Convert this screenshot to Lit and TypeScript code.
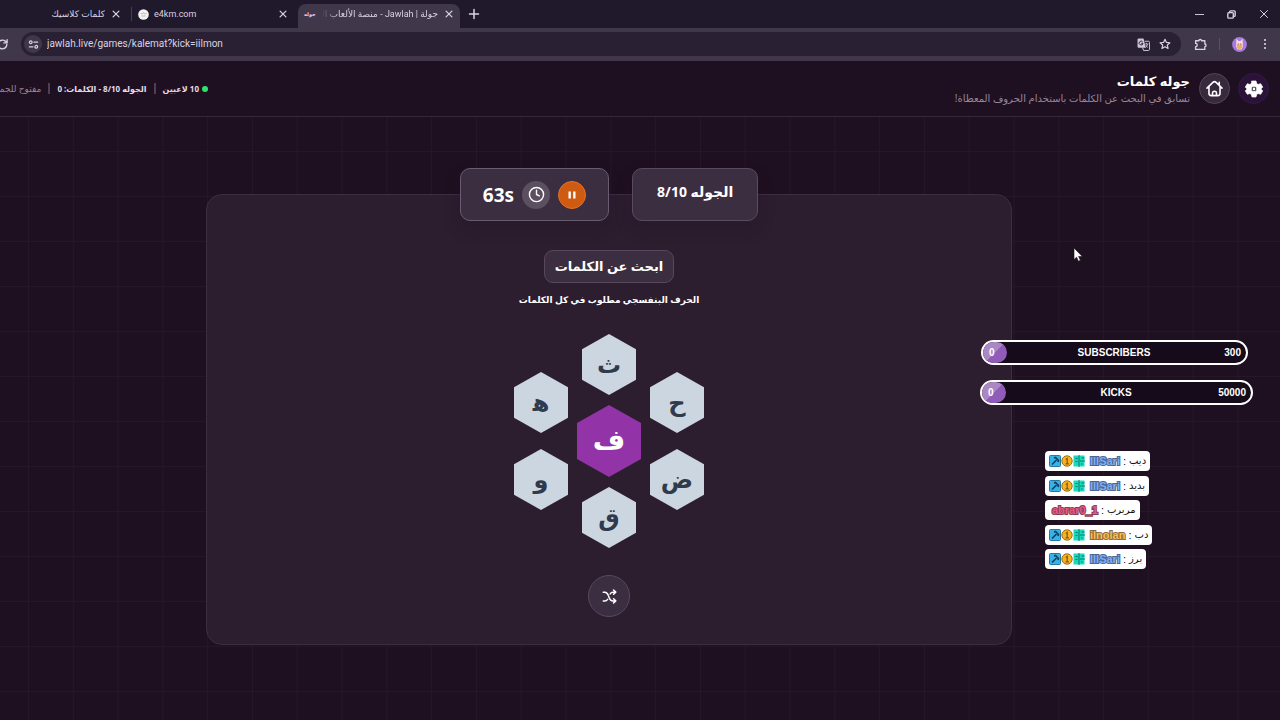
import { LitElement, html, css, svg } from "lit";
import { customElement, property } from "lit/decorators.js";

const icon = (body: unknown, size = 16, width = 2) => html`<svg
  width=${size}
  height=${size}
  viewBox="0 0 24 24"
  fill="none"
  stroke="currentColor"
  stroke-width=${width}
  stroke-linecap="round"
  stroke-linejoin="round"
  aria-hidden="true"
>
  ${body}
</svg>`;

const closePath = svg`<path d="M5 5l14 14M19 5L5 19"/>`;
const gearPath = svg`<path fill="currentColor" stroke="currentColor" stroke-width="1" fill-rule="evenodd" d="M9.600 2.500h4.800l.7 3 1.900 1.100 3-.9 2.400 4.100-2.300 2.200 2.300 2.200-2.400 4.100-3-.9-1.900 1.100-.7 3H9.600l-.7-3L7 17.400l-3 .9-2.400-4.100L3.900 12 1.600 9.800 4 5.700l3 .9 1.900-1.100zM12 15.400a3.400 3.400 0 1 0 0-6.800 3.400 3.400 0 0 0 0 6.800z"/><circle cx="12" cy="12" r="1.700" fill="currentColor" stroke="none"/>`;

@customElement("hex-tile")
export class HexTile extends LitElement {
  @property() letter = "";
  @property({ type: Boolean, reflect: true }) core = false;

  static styles = css`
    :host {
      display: block;
    }
    .tile {
      display: flex;
      align-items: center;
      justify-content: center;
      box-sizing: border-box;
      width: 54px;
      height: 61px;
      padding: 0 0 2px;
      border: 0;
      background: #ccd6e1;
      color: #2f3b4c;
      clip-path: polygon(50% 0, 100% 25%, 100% 75%, 50% 100%, 0 75%, 0 25%);
      font: bold 24px/32px "Noto Sans", "DejaVu Sans", sans-serif;
    }
    :host([core]) .tile {
      width: 64px;
      height: 72px;
      padding-bottom: 6px;
      background: #9234a8;
      color: #fff;
      font-size: 28px;
    }
  `;

  render() {
    return html`<button class="tile" lang="ar">${this.letter}</button>`;
  }
}

@customElement("goal-bar")
export class GoalBar extends LitElement {
  @property() label = "";
  @property() current = "0";
  @property() target = "";

  static styles = css`
    :host {
      display: block;
    }
    .bar {
      display: grid;
      grid-template-columns: 1fr auto 1fr;
      align-items: center;
      box-sizing: border-box;
      height: 25px;
      padding-right: 5px;
      border: 2px solid #fff;
      border-radius: 13px;
      background: #150b1a;
      color: #fff;
      font: bold 10px/14px "Liberation Sans", sans-serif;
    }
    .knob {
      display: flex;
      align-items: center;
      box-sizing: border-box;
      width: 24px;
      height: 21px;
      padding-left: 6px;
      border-radius: 11px;
      background: linear-gradient(135deg, #ab87c4 50%, #915cb9 50%);
    }
    .label {
      padding-left: 4px;
    }
    .target {
      text-align: right;
    }
  `;

  render() {
    return html`<div class="bar">
      <span class="knob">${this.current}</span>
      <span class="label">${this.label}</span>
      <span class="target">${this.target}</span>
    </div>`;
  }
}

interface Message {
  user: string;
  tone: string;
  text: string;
  badges: boolean;
}

@customElement("chat-feed")
export class ChatFeed extends LitElement {
  messages: Message[] = [
    { user: "IllSari", tone: "blue", text: "ديب", badges: true },
    { user: "IllSari", tone: "blue", text: "بديد", badges: true },
    { user: "abrar0_1", tone: "rose", text: "مربرب", badges: false },
    { user: "ilnolan", tone: "gold", text: "دب", badges: true },
    { user: "IllSari", tone: "blue", text: "برز", badges: true },
  ];

  static styles = css`
    .feed {
      display: flex;
      flex-direction: column;
      align-items: flex-start;
      justify-content: space-between;
      min-height: 118px;
      margin: 0;
      padding: 0;
      list-style: none;
    }
    .message {
      display: flex;
      align-items: center;
      height: 20px;
      padding: 0 4px;
      border-radius: 4px;
      background: #fff;
      color: #111;
      font: 11px/20px "Liberation Sans", "DejaVu Sans", sans-serif;
    }
    .badges {
      display: flex;
      margin-right: 4px;
    }
    .user {
      padding: 0 3px 0 1px;
      font-weight: bold;
      font-size: 11px;
      -webkit-text-stroke: 2px #5a6478;
      paint-order: stroke fill;
    }
    .blue {
      color: #7fb0f2;
      -webkit-text-stroke-color: #4a6596;
    }
    .rose {
      padding-left: 3px;
      color: #e65c85;
      -webkit-text-stroke-color: #8f3a55;
    }
    .gold {
      color: #f8be56;
      -webkit-text-stroke-color: #8f6c38;
    }
    .text {
      padding-left: 3px;
      font-size: 10px;
    }
  `;

  badges() {
    return html`<svg class="badges" width="36" height="12" viewBox="0 0 36 12" aria-hidden="true">
      <rect x="0.5" y="0.5" width="11" height="11" rx="1" fill="#35b2e8" stroke="#2378a6" />
      <path d="M3 9.5L7.500 5M5 3l1.500-.5 3 3-.5 1.500" stroke="#123d5c" stroke-width="1.6" fill="none" />
      <circle cx="18" cy="6" r="5.2" fill="#f5b324" stroke="#a36c13" />
      <path d="M16.7 4.5l1.5-1v5M16.5 8.8h3.4" stroke="#8b5a10" stroke-width="1.3" fill="none" />
      <rect x="24.500" y=".5" width="11" height="11" fill="#18d8bd" />
      <path d="M30 0v12M31 6h5M26.500 3.500h2M26.500 6.500h2M32.500 3h3M32 9h1.500" stroke="#087a6d" stroke-width="1" />
    </svg>`;
  }

  render() {
    return html`<ul class="feed">
      ${this.messages.map(
        (m) => html`<li class="message">
          ${m.badges ? this.badges() : ""}<span class="user ${m.tone}">${m.user}</span>:<span
            class="text"
            lang="ar"
            dir="rtl"
            >${m.text}</span
          >
        </li>`,
      )}
    </ul>`;
  }
}

@customElement("browser-chrome")
export class BrowserChrome extends LitElement {
  static styles = css`
    :host {
      display: block;
      font: 10px/14px "Noto Sans", "DejaVu Sans", sans-serif;
      color: #d9d2e2;
    }
    button {
      display: flex;
      align-items: center;
      justify-content: center;
      flex: none;
      padding: 0;
      border: 0;
      background: none;
      color: inherit;
      font: inherit;
    }
    svg {
      flex: none;
    }
    .tabs {
      display: flex;
      align-items: flex-end;
      height: 28px;
      background: #20192c;
    }
    .tab {
      display: flex;
      align-items: center;
      box-sizing: border-box;
      height: 24px;
      padding: 0 6px 4px;
      gap: 6px;
    }
    .first {
      width: 131px;
      padding-right: 10px;
      justify-content: flex-end;
    }
    .second {
      width: 166px;
      padding-right: 10px;
      gap: 5px;
    }
    .rule {
      width: 1px;
      height: 14px;
      margin-bottom: 7px;
      background: #453c52;
    }
    .active {
      width: 162px;
      border-radius: 8px 8px 0 0;
      background: #40374b;
    }
    .title {
      flex: 1;
      min-width: 0;
      overflow: hidden;
      white-space: nowrap;
      font-size: 9px;
    }
    .latin {
      font-family: Roboto, sans-serif;
    }
    .fade {
      font-family: Roboto, "DejaVu Sans", sans-serif;
      mask-image: linear-gradient(to right, transparent, #000 16px);
    }
    .brand {
      flex: none;
      color: #f3c9e6;
      font-size: 5px;
      font-weight: bold;
    }
    .add {
      margin: 0 8px 8px 8px;
    }
    .window {
      display: flex;
      align-items: center;
      gap: 21px;
      height: 28px;
      margin-left: auto;
      padding-right: 10px;
    }
    .toolbar {
      display: flex;
      align-items: center;
      box-sizing: border-box;
      height: 33px;
      padding: 0 9px 1px 0;
      background: #40374b;
    }
    .reload {
      width: 9px;
      margin-right: 12px;
      overflow: hidden;
      justify-content: flex-end;
    }
    .omnibox {
      display: flex;
      align-items: center;
      flex: 1;
      height: 24px;
      padding: 0 10px 0 3px;
      gap: 5px;
      border-radius: 12px;
      background: #292133;
    }
    .site {
      width: 18px;
      height: 18px;
      border-radius: 50%;
      background: #40374b;
    }
    .address {
      flex: 1;
      min-width: 0;
      padding: 0;
      border: 0;
      background: none;
      color: #d9d2e2;
      font: 10px/16px Roboto, sans-serif;
    }
    .star {
      margin-left: 4px;
    }
    .tools {
      display: flex;
      align-items: center;
      gap: 12px;
      margin-left: 13px;
    }
    .split {
      width: 1px;
      height: 12px;
      background: #5a5166;
    }
  `;

  render() {
    return html`
      <nav class="tabs" aria-label="Tabs">
        <div class="tab first">
          <span class="title" lang="ar" dir="rtl">كلمات كلاسيك</span>
          <button aria-label="Close">${icon(closePath, 10, 3)}</button>
        </div>
        <span class="rule"></span>
        <div class="tab second">
          <svg width="11" height="11" viewBox="0 0 11 11" aria-hidden="true">
            <circle cx="5.5" cy="5.5" r="5.3" fill="#f4f1f2" />
            <path d="M2.5 4.5l2 .5 1-1.5 1 1.5 2-.5M3.5 7h4" stroke="#aaa3a8" stroke-width=".7" fill="none" />
          </svg>
          <span class="title latin">e4km.com</span>
          <button aria-label="Close">${icon(closePath, 10, 3)}</button>
        </div>
        <div class="tab active">
          <span class="brand" lang="ar">جوله</span>
          <span class="title fade" lang="ar" dir="rtl">جولة | Jawlah - منصة الألعاب الت</span>
          <button aria-label="Close">${icon(closePath, 10, 3)}</button>
        </div>
        <button class="add" aria-label="New tab">${icon(svg`<path d="M12 3v18M3 12h18"/>`, 12, 3)}</button>
        <div class="window">
          <button aria-label="Minimize">${icon(svg`<path d="M3 12h18"/>`, 11, 2)}</button>
          <button aria-label="Restore">
            ${icon(svg`<rect x="4" y="8" width="12" height="12" rx="2"/><path d="M8 8V6a2 2 0 0 1 2-2h8a2 2 0 0 1 2 2v8a2 2 0 0 1-2 2h-2"/>`, 11, 3)}
          </button>
          <button aria-label="Close window">${icon(closePath, 12, 2)}</button>
        </div>
      </nav>
      <div class="toolbar">
        <button class="reload" aria-label="Reload">
          ${icon(svg`<path d="M20 12a8 8 0 1 1-2.500-5.800L20 8.500M20.500 3v6h-6"/>`, 13, 2.6)}
        </button>
        <div class="omnibox">
          <button class="site" aria-label="Site information">
            ${icon(svg`<circle cx="6" cy="7" r="3"/><path d="M13 7h8M3 17h8"/><circle cx="18" cy="17" r="3"/>`, 11, 2.6)}
          </button>
          <input class="address" aria-label="Address" value="jawlah.live/games/kalemat?kick=iilmon" />
          <button aria-label="Translate">
            <svg width="13" height="13" viewBox="0 0 24 24" aria-hidden="true">
              <path d="M3 1h9l4 17H3a2 2 0 0 1-2-2V3a2 2 0 0 1 2-2z" fill="#cfc7d8" />
              <path d="M10.500 7.500A3.500 3.500 0 1 0 11 10H8" fill="none" stroke="#292133" stroke-width="1.8" />
              <path d="M14 6h7a2 2 0 0 1 2 2v13a2 2 0 0 1-2 2h-9l-1.500-5" fill="none" stroke="#cfc7d8" stroke-width="1.800" />
              <path d="M14 11h7M17.500 9v2M19.500 11c-.5 3-2 5-4 7M16 13c1 2 2.500 3.500 4 4.500" fill="none" stroke="#cfc7d8" stroke-width="1.500" />
            </svg>
          </button>
          <button class="star" aria-label="Bookmark">
            ${icon(svg`<path d="M12 2.500l2.900 6.300 6.900.7-5.200 4.600 1.500 6.800L12 17.400l-6.100 3.500 1.500-6.800L2.200 9.500l6.900-.7z"/>`, 12, 2.4)}
          </button>
        </div>
        <div class="tools">
          <button aria-label="Extensions">
            ${icon(svg`<path d="M3 5h6c0-3 5-3 5 0h6v6c3 0 3 5 0 5v5H3v-5c4 0 4-6 0-6z"/>`, 13, 2.5)}
          </button>
          <span class="split"></span>
          <button aria-label="Profile">
            <svg width="15" height="15" viewBox="0 0 15 15" aria-hidden="true">
              <circle cx="7.500" cy="7.500" r="7.400" fill="#a67be0" />
              <path d="M4.200 6L4.500 1.500 6.500 4h2l2-2.500L10.800 6v4l-1.500 2.500H5.700L4.200 10z" fill="#f6dcd0" />
              <path d="M5 7.500h5v3L8.500 12h-2L5 10.500z" fill="#f0ad62" />
              <circle cx="6.200" cy="7" r=".6" fill="#5b3556" /><circle cx="8.800" cy="7" r=".6" fill="#5b3556" />
            </svg>
          </button>
          <button aria-label="Menu">
            ${icon(svg`<g fill="currentColor" stroke="none"><circle cx="12" cy="4" r="2.200"/><circle cx="12" cy="12" r="2.200"/><circle cx="12" cy="20" r="2.200"/></g>`, 12)}
          </button>
        </div>
      </div>
    `;
  }
}

@customElement("app-root")
export class AppRoot extends LitElement {
  static styles = css`
    :host {
      display: flex;
      flex-direction: column;
      position: relative;
      min-height: 100vh;
      overflow: hidden;
      background: #1f1021;
      color: #fff;
      font: bold 12px/16px "Noto Sans", "DejaVu Sans", sans-serif;
    }
    button {
      display: flex;
      align-items: center;
      justify-content: center;
      flex: none;
      box-sizing: border-box;
      padding: 0;
      border: 0;
      color: inherit;
      border-radius: 50%;
    }
    .header {
      display: flex;
      align-items: center;
      box-sizing: border-box;
      height: 56px;
      padding-right: 11px;
      border-bottom: 1px solid #37263a;
      background: #1f1021;
    }
    .round {
      width: 31px;
      height: 31px;
    }
    .settings {
      border: 1px solid #35184a;
      background: #2b1238;
    }
    .home {
      margin-right: 8px;
      border: 1px solid #54455a;
      background: #382a3d;
    }
    .heading {
      flex: 1;
      margin-right: 9px;
    }
    h1 {
      margin: 0;
      font-size: 13px;
      line-height: 18px;
    }
    .heading p {
      margin: 0;
      color: #96859c;
      font-size: 10px;
      font-weight: normal;
      line-height: 16px;
    }
    .status {
      display: flex;
      align-items: center;
      flex: 0 0 208px;
      gap: 7px;
      overflow: hidden;
      white-space: nowrap;
      color: #e4dde8;
      font-size: 8px;
    }
    .status span {
      flex: none;
    }
    .players {
      display: flex;
      align-items: center;
      gap: 3px;
    }
    .dot {
      width: 6px;
      height: 6px;
      border-radius: 50%;
      background: #2fe070;
    }
    .bar {
      width: 2px;
      height: 11px;
      background: #4e3f54;
    }
    .status .muted {
      color: #94859a;
      font-size: 9px;
      font-weight: normal;
    }
    .main {
      flex: 1;
      padding: 51px 268px 75px 206px;
      background-image: linear-gradient(#261628 1px, transparent 1px),
        linear-gradient(to right, #261628 1px, transparent 1px);
      background-size: 100% 45px, 3.5% 100%;
      background-position: 0 34px, 28px 0;
    }
    .badges {
      display: flex;
      position: relative;
      z-index: 1;
      justify-content: center;
      gap: 23px;
    }
    .badge {
      display: flex;
      box-sizing: border-box;
      height: 53px;
      border: 1px solid #5a4b60;
      border-radius: 10px;
      background: #3c2e41;
      box-shadow: 0 8px 16px #1f102140;
    }
    .timer {
      align-items: center;
      gap: 8px;
      padding: 0 22px;
      border-color: #6a5c70;
    }
    .seconds {
      font-size: 19px;
      line-height: 24px;
    }
    .clock,
    .pause {
      display: flex;
      align-items: center;
      justify-content: center;
      width: 28px;
      height: 28px;
      border-radius: 50%;
      background: #5b505f;
    }
    .pause {
      border: 1px solid #e8711f;
      background: #cf5a12;
    }
    .round-no {
      align-items: flex-start;
      padding: 12px 24px;
      font-size: 14px;
      line-height: 22px;
    }
    .panel {
      display: flex;
      flex-direction: column;
      align-items: center;
      box-sizing: border-box;
      margin-top: -27px;
      padding: 55px 16px 27px;
      border: 1px solid #3d2d41;
      border-radius: 16px;
      background: #2c1d2f;
    }
    h2 {
      box-sizing: border-box;
      height: 33px;
      margin: 0;
      padding: 0 10px;
      border: 1px solid #57485c;
      border-radius: 9px;
      background: #3c2e41;
      font-size: 13px;
      line-height: 31px;
    }
    .hint {
      margin: 9px 0 26px;
      font-size: 9px;
      line-height: 16px;
    }
    .letters {
      display: flex;
      align-items: center;
      gap: 9px;
    }
    .column {
      display: flex;
      flex-direction: column;
      align-items: center;
      gap: 16px;
    }
    .middle {
      gap: 10px;
    }
    .shuffle {
      width: 42px;
      height: 42px;
      margin-top: 27px;
      border: 1px solid #57485c;
      background: #3c2e41;
    }
    .goals {
      display: flex;
      flex-direction: column;
      position: absolute;
      top: 340px;
      right: 27px;
      width: 273px;
      gap: 15px;
    }
    .subscribers {
      margin: 0 5px 0 1px;
    }
    .chat {
      position: absolute;
      top: 451px;
      right: 128px;
      width: 107px;
    }
    .cursor {
      position: absolute;
      top: 247px;
      right: 197px;
    }
  `;

  render() {
    return html`
      <browser-chrome></browser-chrome>
      <header class="header" lang="ar" dir="rtl">
        <button class="round settings" aria-label="الإعدادات">${icon(gearPath, 20)}</button>
        <button class="round home" aria-label="الرئيسية">
          ${icon(svg`<path d="M2.500 11.500L10 4.300a3 3 0 0 1 4 0l7.500 7.200M5 9.500V18a3 3 0 0 0 3 3h8a3 3 0 0 0 3-3V9.500M18 4v4M9.500 20.500V18a2.500 2.500 0 0 1 5 0v2.500"/>`, 19, 2)}
        </button>
        <div class="heading">
          <h1>جوله كلمات</h1>
          <p>تسابق في البحث عن الكلمات باستخدام الحروف المعطاة!</p>
        </div>
        <div class="status">
          <span class="players"><span class="dot"></span>10 لاعبين</span>
          <span class="bar"></span>
          <span>الجوله 8/10 - الكلمات: 0</span>
          <span class="bar"></span>
          <span class="muted">مفتوح للجميع</span>
        </div>
      </header>
      <main class="main">
        <div class="badges">
          <div class="badge timer">
            <span class="seconds">63s</span>
            <span class="clock">${icon(svg`<circle cx="12" cy="12" r="10"/><path d="M12 6v6l4 2"/>`, 17, 2)}</span>
            <button class="pause" aria-label="إيقاف مؤقت">
              ${icon(svg`<path d="M8 6v12M16 6v12" stroke-linecap="butt"/>`, 14, 4)}
            </button>
          </div>
          <div class="badge round-no" lang="ar" dir="rtl">الجوله 8/10</div>
        </div>
        <section class="panel">
          <h2 lang="ar" dir="rtl">ابحث عن الكلمات</h2>
          <p class="hint" lang="ar" dir="rtl">الحرف البنفسجي مطلوب في كل الكلمات</p>
          <div class="letters">
            <div class="column">
              <hex-tile letter=${"ه\u200d"}></hex-tile>
              <hex-tile letter="و"></hex-tile>
            </div>
            <div class="column middle">
              <hex-tile letter="ث"></hex-tile>
              <hex-tile letter="ف" core></hex-tile>
              <hex-tile letter="ق"></hex-tile>
            </div>
            <div class="column">
              <hex-tile letter="ح"></hex-tile>
              <hex-tile letter="ض"></hex-tile>
            </div>
          </div>
          <button class="shuffle" aria-label="خلط الحروف">
            ${icon(svg`<path d="M2 5h2.500c3 0 4.500 2 5.500 5l1.500 4c1 3 3 5 6 5H22M2 19h2.500c2 0 3.500-1 4.500-2.500M13 8c1-2 2.500-3 4.500-3H22M18.500 1.500L22 5l-3.500 3.500M18.500 15.500L22 19l-3.500 3.500"/>`, 15, 2.4)}
          </button>
        </section>
      </main>
      <aside class="goals">
        <goal-bar class="subscribers" label="SUBSCRIBERS" target="300"></goal-bar>
        <goal-bar label="KICKS" target="50000"></goal-bar>
      </aside>
      <chat-feed class="chat"></chat-feed>
      <svg class="cursor" width="10" height="15" viewBox="0 0 10 15" aria-hidden="true">
        <path d="M1 1v11.500l2.600-2.300 1.800 4 2-.9-1.800-3.800H9.300z" fill="#fff" stroke="#1a0d1c" stroke-width=".6" />
      </svg>
    `;
  }
}
